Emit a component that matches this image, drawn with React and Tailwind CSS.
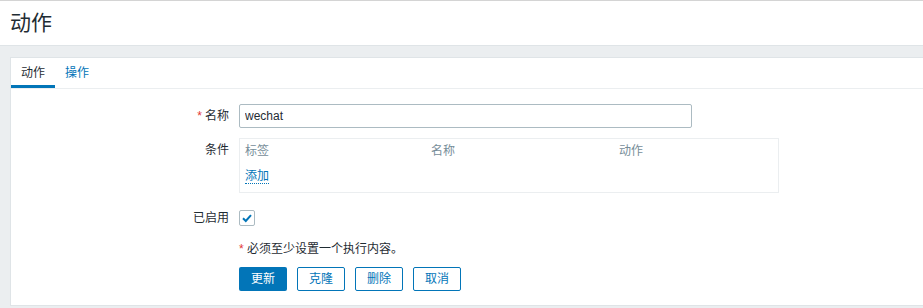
export default function App() {
  const font = { fontFamily: '"Liberation Sans", Arial, "Noto Sans CJK SC", sans-serif' };

  return (
    <div
      className="min-h-[308px] bg-[#ebeef0] text-[12px] text-[#1f2c33] flex flex-col font-['Liberation_Sans','Noto_Sans_CJK_SC',sans-serif]"
    >
      <header className="h-[46px] bg-white border-t border-[#d4d4d4] border-b border-b-[#dfe4e7] pl-[10px] flex items-center">
        <h1 className="m-0 text-[21px] leading-[24px] font-normal text-[#1f2c33]">动作</h1>
      </header>

      <div className="pt-[11px] pl-[10px] pb-[2px] flex-1 flex">
        <div className="flex-1 bg-white border border-r-0 border-[#dfe4e7] flex flex-col">
          <div className="flex border-b border-[#ebeef0]">
            <div className="h-[30px] pt-[3px] px-[10px] flex items-center border-b-[3px] border-[#0275b8] text-[#1f2c33]">
              动作
            </div>
            <div className="h-[30px] pt-[3px] px-[10px] flex items-center border-b-[3px] border-transparent text-[#0275b8]">
              操作
            </div>
          </div>

          <div className="pt-[15px] pb-[14px] flex flex-col">
            <div className="flex items-start">
              <div className="w-[219px] pr-[1px] text-right leading-[24px]">
                <span className="text-[#e33734] mr-[3px]">*</span>名称
              </div>
              <input
                type="text"
                defaultValue="wechat"
                className="ml-[9px] w-[453px] h-[24px] border border-[#acbbc2] rounded-[2px] px-[5px] text-[12px] text-[#1f2c33] outline-none"
                style={font}
              />
            </div>

            <div className="flex items-start mt-[10px]">
              <div className="w-[219px] pr-[1px] text-right leading-[24px]">条件</div>
              <div className="ml-[9px] w-[540px] h-[55px] border border-[#ebeef0] px-[5px] pt-[4px]">
                <div className="grid grid-cols-[186px_188px_1fr] leading-[16px] text-[#768d99]">
                  <span>标签</span>
                  <span>名称</span>
                  <span>动作</span>
                </div>
                <div className="mt-[8px]">
                  <span className="inline-block leading-[14px] text-[#0275b8] border-b border-dotted border-[#0275b8]">
                    添加
                  </span>
                </div>
              </div>
            </div>

            <div className="flex items-center mt-[17px]">
              <div className="w-[219px] pr-[1px] text-right leading-[16px]">已启用</div>
              <div className="ml-[9px] w-[16px] h-[16px] border border-[#acbbc2] rounded-[2px] flex items-center justify-center">
                <svg width="12" height="12" viewBox="0 0 12 12">
                  <path d="M2 6.2 L4.8 9 L10 3.2" fill="none" stroke="#0275b8" strokeWidth="2" />
                </svg>
              </div>
            </div>

            <div className="ml-[228px] mt-[16px] leading-[14px]">
              <span className="text-[#e33734]">*</span> 必须至少设置一个执行内容。
            </div>

            <div className="ml-[228px] mt-[11px] flex gap-[10px]">
              <button className="w-[48px] h-[24px] rounded-[2px] bg-[#0275b8] text-white text-[12px]">更新</button>
              <button className="w-[48px] h-[24px] rounded-[2px] border border-[#0275b8] bg-white text-[#0275b8] text-[12px]">克隆</button>
              <button className="w-[48px] h-[24px] rounded-[2px] border border-[#0275b8] bg-white text-[#0275b8] text-[12px]">删除</button>
              <button className="w-[48px] h-[24px] rounded-[2px] border border-[#0275b8] bg-white text-[#0275b8] text-[12px]">取消</button>
            </div>
          </div>
        </div>
      </div>
    </div>
  );
}
